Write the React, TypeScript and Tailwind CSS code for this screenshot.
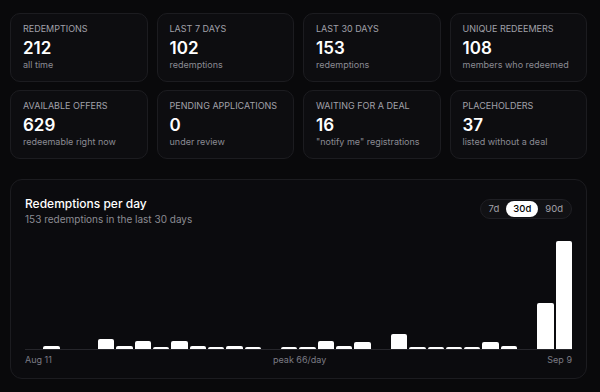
import React from "react";

const stats = [
  { label: "Redemptions", value: "212", sub: "all time" },
  { label: "Last 7 days", value: "102", sub: "redemptions" },
  { label: "Last 30 days", value: "153", sub: "redemptions" },
  { label: "Unique redeemers", value: "108", sub: "members who redeemed" },
  { label: "Available offers", value: "629", sub: "redeemable right now" },
  { label: "Pending applications", value: "0", sub: "under review" },
  { label: "Waiting for a deal", value: "16", sub: "\"notify me\" registrations" },
  { label: "Placeholders", value: "37", sub: "listed without a deal" },
];

// redemptions per day, last 30 days (Aug 11 -> Sep 9)
const daily = [
  0, 2, 0, 0, 6, 2, 5, 1, 5, 2, 1, 2, 1, 0, 1,
  1, 5, 2, 4, 0, 9, 1, 1, 1, 1, 4, 2, 0, 28, 66,
];

const StatCard = ({ label, value, sub }: { label: string; value: string; sub: string }) => (
  <div className="rounded-[10px] border border-[#1c1c20] bg-[#0d0d10] px-3 pt-[9px] pb-2 h-[69px]">
    <div className="text-[9px] uppercase text-[#a1a1aa] leading-3 whitespace-nowrap">{label}</div>
    <div className="text-[17px] font-semibold text-white leading-5 mt-[3px]">{value}</div>
    <div className="text-[9px] text-[#8b8b93] leading-3 mt-[1px] whitespace-nowrap">{sub}</div>
  </div>
);

export default function App() {
  const peak = Math.max(...daily);
  const ranges = ["7d", "30d", "90d"];

  return (
    <div
      className="min-h-[392px] bg-[#09090b] pl-[10px] pr-[13px] pt-[13px] pb-3"
      style={{ fontFamily: "Inter, 'Noto Sans', sans-serif" }}
    >
      {/* Stat cards */}
      <div className="grid grid-cols-4 gap-x-[9px] gap-y-2">
        {stats.map((s, i) => (
          <StatCard key={i} {...s} />
        ))}
      </div>

      {/* Redemptions chart */}
      <div className="mt-[20px] rounded-[12px] border border-[#1c1c20] bg-[#0b0b0e] px-[14px] pt-[16px] pb-[12px]">
        <div className="flex items-start justify-between">
          <div>
            <div className="text-[12px] font-medium text-white leading-4">Redemptions per day</div>
            <div className="text-[10px] text-[#8b8b93] leading-[14px]">153 redemptions in the last 30 days</div>
          </div>
          <div className="flex items-center rounded-full border border-[#1f1f24] bg-[#111114] p-[1px] mt-[3px]">
            {ranges.map((r) => (
              <div
                key={r}
                className={`h-[16px] px-[7px] rounded-full text-[9.5px] leading-[16px] ${
                  r === "30d" ? "bg-white text-black font-medium" : "text-[#a1a1aa]"
                }`}
              >
                {r}
              </div>
            ))}
          </div>
        </div>

        <div className="mt-[15px] flex items-end gap-[2px] h-[109px] border-b border-[#26262b]">
          {daily.map((v, i) => (
            <div key={i} className="flex-1 flex items-end h-full">
              {v > 0 && (
                <div
                  className="w-full bg-white rounded-t-[2px]"
                  style={{ height: `${(v / peak) * 108}px` }}
                />
              )}
            </div>
          ))}
        </div>

        <div className="flex justify-between mt-[4px] text-[9px] text-[#7c7c85] leading-3">
          <span>Aug 11</span>
          <span>peak {peak}/day</span>
          <span>Sep 9</span>
        </div>
      </div>
    </div>
  );
}
